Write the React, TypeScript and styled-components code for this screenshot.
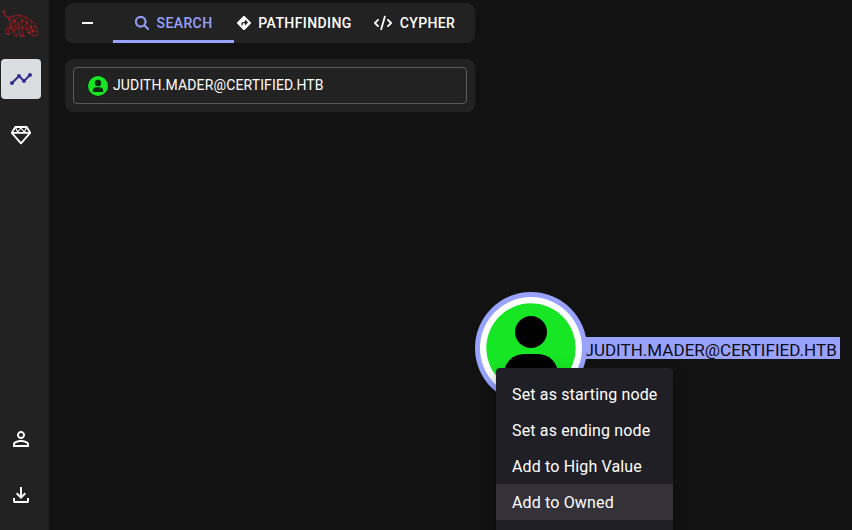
import React from "react";
import styled, { createGlobalStyle } from "styled-components";
import { FaMagnifyingGlass, FaDiamondTurnRight, FaCode } from "react-icons/fa6";
import { MdTimeline, MdPersonOutline } from "react-icons/md";

const GlobalStyle = createGlobalStyle`
  * { box-sizing: border-box; }
  body {
    margin: 0;
    background: #121212;
    color: #fff;
    font-family: Roboto, "Liberation Sans", sans-serif;
    overflow: hidden;
  }
  svg { display: block; flex: none; }
`;

const Page = styled.div`
  position: relative;
  display: flex;
  width: 852px;
  height: 530px;
  overflow: hidden;
`;

const Sidebar = styled.nav`
  display: flex;
  flex-direction: column;
  width: 49px;
  height: 100%;
  background: #222;
  padding: 3px 0 15px 1px;
`;

const Brand = styled.div`
  height: 56px;
  padding: 5px 0 0 1px;
`;

const NavButton = styled.a<{ $active?: boolean }>`
  display: flex;
  align-items: center;
  justify-content: center;
  width: 40px;
  height: 40px;
  margin-bottom: 16px;
  border-radius: 4px;
  color: ${(p) => (p.$active ? "#33318f" : "#fff")};
  background: ${(p) => (p.$active ? "#dadee1" : "transparent")};
  &:last-child { margin-bottom: 0; }
`;

const Spacer = styled.div`
  flex: 1;
`;

const Explore = styled.main`
  display: flex;
  flex-direction: column;
  gap: 16px;
  width: 426px;
  padding: 3px 0 0 16px;
`;

const TabBar = styled.div`
  display: flex;
  height: 40px;
  background: #222;
  border-radius: 8px;
`;

const Collapse = styled.button`
  display: flex;
  align-items: center;
  width: 48px;
  padding: 0 0 0 17px;
  border: 0;
  background: none;
`;

const Dash = styled.span`
  width: 11px;
  height: 2px;
  background: #fff;
`;

const Tab = styled.button<{ $active?: boolean; $width: number; $gap: number }>`
  display: flex;
  align-items: center;
  justify-content: center;
  gap: ${(p) => p.$gap}px;
  width: ${(p) => p.$width}px;
  padding: 0;
  border: 0;
  background: none;
  box-shadow: ${(p) => (p.$active ? "inset 0 -3px #99a3ff" : "none")};
  color: ${(p) => (p.$active ? "#99a3ff" : "#fff")};
  font: 500 14px/20px Roboto, sans-serif;
  letter-spacing: 0.4px;
  white-space: nowrap;
`;

const SearchIcon = styled(FaMagnifyingGlass)`
  stroke: currentColor;
  stroke-width: 12px;
`;

const SearchPanel = styled.section`
  height: 53px;
  padding: 8px;
  background: #222;
  border-radius: 8px;
`;

const SearchField = styled.div`
  display: flex;
  align-items: center;
  gap: 4px;
  height: 37px;
  padding-left: 13px;
  border: 1px solid #5b5b5b;
  border-radius: 4px;
  font-size: 14px;
  letter-spacing: 0.13px;
  svg { margin-top: 1px; }
`;

const SearchText = styled.span`
  line-height: 20px;
  margin-top: -1px;
`;

const NodeLabel = styled.div`
  position: absolute;
  left: 578px;
  top: 337px;
  width: 262px;
  height: 22px;
  padding-left: 6.5px;
  background: #99a3ff;
  color: #0c0c14;
  font-size: 17px;
  letter-spacing: 0.02px;
  line-height: 26px;
  white-space: nowrap;
`;

const NodeShape = styled.svg`
  position: absolute;
  left: 474px;
  top: 291px;
`;

const Menu = styled.ul`
  position: absolute;
  left: 496px;
  top: 368px;
  width: 177px;
  height: 200px;
  margin: 0;
  padding: 8px 0;
  list-style: none;
  background: #201f25;
  border-radius: 4px;
  box-shadow: 0 5px 5px -3px rgba(0,0,0,.2), 0 8px 10px 1px rgba(0,0,0,.14), 0 3px 14px 2px rgba(0,0,0,.12);
`;

const MenuItem = styled.li<{ $hover?: boolean }>`
  height: 36px;
  padding: 1px 16px 0;
  background: ${(p) => (p.$hover ? "#343238" : "transparent")};
  font-size: 16px;
  line-height: 36px;
  letter-spacing: 0.15px;
  white-space: nowrap;
`;

const Hound = () => (
  <svg width="40" height="32" viewBox="0 0 40 32" fill="none" stroke="#a3191d" strokeWidth=".75" strokeLinejoin="round">
    <path d="M2 1L1.5 4L3 7L6 9L11 8L18 7L24 9L30 13L34 18L36 24L36 27L31 28L27 25L24 21L20 20L21 27L23 28L18 28L17 20L13 19L12 23L16 28L13 28L10 23L9 19L6 22L8 26L4 26L4 22L8 16L7 11L3 8L1.5 4" />
    <path d="M7 11L11 8L13 13L18 7L20 13L24 9L25 15L30 13L29 19L34 18L31 23L36 24M8 16L13 13L9 19L13 19L16 15L20 13L20 20L25 15L24 21L29 19L27 25L31 23L31 28M7 11L13 13L16 15L17 20M20 13L25 15L29 19L31 23M12 23L17 20L18 28M12 23L9 19M13 13L13 19M16 15L20 20M4 22L9 19L7 11M24 21L31 23L27 25" strokeWidth=".65" />
    <g fill="#c9252a" stroke="none">
      <circle cx="2" cy="4" r=".8" /><circle cx="7" cy="11" r=".7" /><circle cx="13" cy="13" r=".7" />
      <circle cx="20" cy="13" r=".7" /><circle cx="25" cy="15" r=".8" /><circle cx="29" cy="19" r=".8" />
      <circle cx="20" cy="20" r=".7" /><circle cx="31" cy="23" r=".8" /><circle cx="27" cy="25" r=".8" />
      <circle cx="9" cy="19" r=".7" /><circle cx="20" cy="28" r=".8" /><circle cx="6" cy="26" r=".7" />
    </g>
  </svg>
);

const Gem = () => (
  <svg width="24" height="24" viewBox="0 0 24 24" fill="none" stroke="currentColor" strokeWidth="1.8" strokeLinejoin="round">
    <path d="M6.3 4H17.7L21.2 9.8L12 20.3L2.8 9.8ZM2.8 9.8H21.2" />
    <path d="M6.5 4.5L8.7 9.2L12 5L15.3 9.2L17.5 4.5" strokeWidth="1.2" />
  </svg>
);

const Download = () => (
  <svg width="24" height="24" viewBox="0 0 24 24" fill="currentColor">
    <path d="M12 16l-5-5 1.4-1.45 2.6 2.6V4h2v8.15l2.6-2.6L17 11zm-6 4q-.825 0-1.412-.587T4 18v-3h2v3h12v-3h2v3q0 .825-.587 1.413T18 20z" />
  </svg>
);

const UserBadge = () => (
  <svg width="22" height="22" viewBox="0 0 22 22">
    <circle cx="11" cy="11" r="10.5" fill="#101610" />
    <circle cx="11" cy="11" r="10" fill="#17e625" />
    <circle cx="11" cy="8" r="3.2" fill="#082c0b" />
    <path d="M5.8 17v-1.2a3.6 3.6 0 0 1 3.6-3.6h3.2a3.6 3.6 0 0 1 3.6 3.6V17z" fill="#082c0b" />
  </svg>
);

const menuItems = ["Set as starting node", "Set as ending node", "Add to High Value", "Add to Owned"];

export default function App() {
  return (
    <>
      <GlobalStyle />
      <Page>
        <Sidebar>
          <Brand><Hound /></Brand>
          <NavButton $active><MdTimeline size={24} /></NavButton>
          <NavButton><Gem /></NavButton>
          <Spacer />
          <NavButton><MdPersonOutline size={24} /></NavButton>
          <NavButton><Download /></NavButton>
        </Sidebar>
        <Explore>
          <TabBar>
            <Collapse aria-label="Collapse"><Dash /></Collapse>
            <Tab $active $width={121} $gap={8}><SearchIcon size={14} />SEARCH</Tab>
            <Tab $width={121} $gap={7}><FaDiamondTurnRight size={14} />PATHFINDING</Tab>
            <Tab $width={119} $gap={8}><FaCode size={18} />CYPHER</Tab>
          </TabBar>
          <SearchPanel>
            <SearchField>
              <UserBadge />
              <SearchText>JUDITH.MADER@CERTIFIED.HTB</SearchText>
            </SearchField>
          </SearchPanel>
        </Explore>
        <NodeLabel>JUDITH.MADER@CERTIFIED.HTB</NodeLabel>
        <NodeShape width="114" height="114" viewBox="0 0 114 114">
          <circle cx="57" cy="57" r="56" fill="#99a3ff" />
          <circle cx="57" cy="57" r="51" fill="#fff" />
          <circle cx="57" cy="57" r="44.7" fill="#17e625" />
          <circle cx="57" cy="41" r="16" fill="#000" />
          <path d="M30 88v-5a20 20 0 0 1 20-20h14a20 20 0 0 1 20 20v5z" fill="#000" />
        </NodeShape>
        <Menu>
          {menuItems.map((item) => (
            <MenuItem key={item} $hover={item === "Add to Owned"}>{item}</MenuItem>
          ))}
        </Menu>
      </Page>
    </>
  );
}
